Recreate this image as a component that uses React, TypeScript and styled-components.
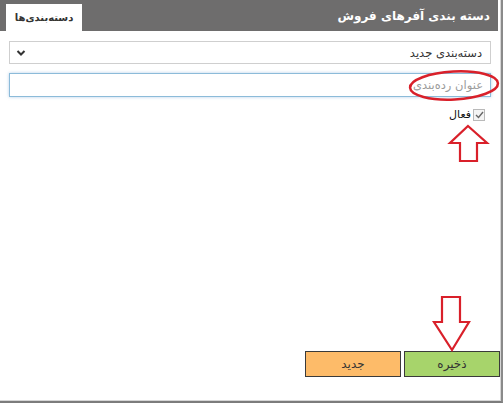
import React from "react";
import styled, {createGlobalStyle} from "styled-components";

/**     STYLED      **/
const GlobalStyle = createGlobalStyle`
    html, body {
        margin: 0;
        padding: 0;
        background: #fff;
    }
    body {
        font-family: "DejaVu Sans", "Noto Sans", sans-serif;
    }
`

const StyledWindow = styled.div`
    position: relative;
    box-sizing: border-box;
    width: 503px;
    height: 403px;
    display: flex;
    flex-direction: column;
    direction: rtl;
    border-right: 2px solid #8a8a8a;
    border-bottom: 2px solid #7c7c7c;
    box-shadow: inset -1px -1px 0 #d6d6d6;
    padding-right: 1px;
`

const StyledHeader = styled.header`
    height: 31px;
    margin-right: 2px;
    background: #6e6d6d;
    display: flex;
    align-items: flex-end;
    justify-content: space-between;
    padding: 0 8px 0 6px;
`

const StyledTitle = styled.h1`
    margin: 0;
    align-self: center;
    color: #fff;
    font-size: 12px;
    font-weight: bold;
`

const StyledTab = styled.div`
    width: 76px;
    height: 27px;
    background: #fff;
    color: #333;
    font-size: 10px;
    font-weight: bold;
    display: flex;
    align-items: center;
    justify-content: center;
`

const StyledBody = styled.div`
    flex: 1;
    display: flex;
    flex-direction: column;
    padding: 10px 9px 0 9px;
`

const StyledSelect = styled.div`
    box-sizing: border-box;
    height: 23px;
    border: 1px solid #cfcfcf;
    display: flex;
    align-items: center;
    justify-content: space-between;
    padding: 0 8px 0 6px;
    color: #333;
    font-size: 11.5px;
`

const StyledInput = styled.input`
    box-sizing: border-box;
    margin-top: 9px;
    height: 24px;
    border: 1px solid #8cbbd9;
    box-shadow: 0 0 3px rgba(120, 170, 215, 0.55);
    outline: none;
    padding: 0 7px;
    font-family: "DejaVu Sans", sans-serif;
    font-size: 11.5px;
    direction: rtl;
    &::placeholder {
        color: #9b9b9b;
    }
`

const StyledCheckRow = styled.label`
    margin-top: 11px;
    display: flex;
    align-items: center;
    gap: 2px;
    padding-right: 6px;
    font-size: 11px;
    color: #111;
`

const StyledCheckBox = styled.span`
    box-sizing: border-box;
    width: 12px;
    height: 12px;
    border: 1px solid #b9b9b9;
    background: #f4f4f4;
    display: flex;
    align-items: center;
    justify-content: center;
`

const StyledActions = styled.div`
    margin: auto -9px 24px 0;
    display: flex;
    gap: 3px;
`

const StyledButton = styled.button<{ $tone: "save" | "new" }>`
    box-sizing: border-box;
    width: 96px;
    height: 26px;
    border: 1px solid #3a3a3a;
    background: ${p => p.$tone === "save" ? "#a7d46b" : "#fdbb69"};
    color: #333;
    font-family: "DejaVu Sans", sans-serif;
    font-size: 12px;
    padding: 0;
`

const StyledMarks = styled.svg`
    position: absolute;
    left: 0;
    top: 0;
    pointer-events: none;
`
/**     STYLED      **/

export default function App() {
    return (
        <>
            <GlobalStyle/>
            <StyledWindow>
                <StyledHeader>
                    <StyledTitle>دسته بندی آفرهای فروش</StyledTitle>
                    <StyledTab>دسته‌بندی‌ها</StyledTab>
                </StyledHeader>
                <StyledBody>
                    <StyledSelect>
                        <span>دسته‌بندی جدید</span>
                        <svg width="10" height="8" viewBox="0 0 10 8">
                            <polyline points="1.5,2 5,5.5 8.5,2" fill="none" stroke="#333" strokeWidth="2"/>
                        </svg>
                    </StyledSelect>
                    <StyledInput placeholder="عنوان رده‌بندی"/>
                    <StyledCheckRow>
                        <StyledCheckBox>
                            <svg width="9" height="8" viewBox="0 0 9 8">
                                <polyline points="1,4 3.5,6.5 8,1" fill="none" stroke="#666" strokeWidth="1.4"/>
                            </svg>
                        </StyledCheckBox>
                        <span>فعال</span>
                    </StyledCheckRow>
                    <StyledActions>
                        <StyledButton $tone="save">ذخیره</StyledButton>
                        <StyledButton $tone="new">جدید</StyledButton>
                    </StyledActions>
                </StyledBody>
                {/* red callouts drawn over the form */}
                <StyledMarks width="503" height="403">
                    <ellipse cx="454" cy="85.5" rx="44" ry="14" transform="rotate(-3 454 85.5)"
                             fill="none" stroke="#d9202a" strokeWidth="2.5"/>
                    <polygon points="468,126 487,143 477,143 477,161 460,161 460,143 450,143"
                             fill="none" stroke="#d9202a" strokeWidth="2.2" strokeLinejoin="miter"/>
                    <polygon points="442,297 460,297 460,322 469,322 452,350 434,322 442,322"
                             fill="none" stroke="#d9202a" strokeWidth="2.2" strokeLinejoin="miter"/>
                </StyledMarks>
            </StyledWindow>
        </>
    );
}
